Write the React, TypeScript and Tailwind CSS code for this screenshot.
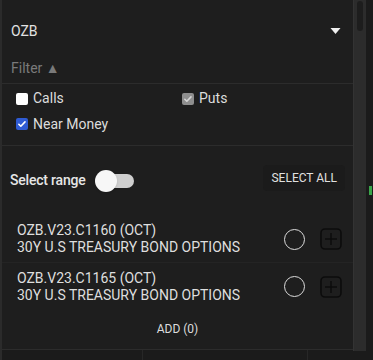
import React from "react";

type Item = { code: string; name: string };

const items: Item[] = [
  { code: "OZB.V23.C1160 (OCT)", name: "30Y U.S TREASURY BOND OPTIONS" },
  { code: "OZB.V23.C1165 (OCT)", name: "30Y U.S TREASURY BOND OPTIONS" },
];

function Check({ tone }: { tone: "off" | "muted" | "on" }) {
  if (tone === "off") {
    return <span className="w-[12px] h-[12px] rounded-[2px] bg-white shrink-0" />;
  }
  const bg = tone === "on" ? "bg-[#2f5bd3]" : "bg-[#8e8e8e]";
  const stroke = tone === "on" ? "#ffffff" : "#d6d6d6";
  return (
    <span className={`w-[12px] h-[12px] rounded-[2px] ${bg} shrink-0 flex items-center justify-center`}>
      <svg viewBox="0 0 12 12" className="w-[10px] h-[10px]">
        <path d="M2.2 6.3l2.4 2.4 5-5.2" stroke={stroke} strokeWidth="1.9" fill="none" strokeLinecap="round" strokeLinejoin="round" />
      </svg>
    </span>
  );
}

export default function App() {
  return (
    <div
      className="w-[373px] h-[360px] overflow-hidden flex bg-[#1b1b1b] text-[#dcdcdc]"
      style={{ fontFamily: "Roboto, 'Noto Sans', sans-serif" }}
    >
      {/* panneau principal */}
      <div className="w-[353px] shrink-0 flex flex-col">
        <div className="h-[350px] flex flex-col bg-[#1e1e1e] border-l-2 border-[#2b2b2b] border-b border-b-[#2c2c2c]">
          <div className="h-[14px] overflow-hidden">
            <div className="-mt-[10px] pl-[30px] text-[13px] text-[#5a5a5a] tracking-[6px]">—— — —— — ——</div>
          </div>

          {/* select */}
          <div className="h-[34px] flex items-center justify-between pl-[9px] pr-[12px]">
            <span className="text-[14px] text-[#e2e2e2]">OZB</span>
            <svg viewBox="0 0 10 6" className="w-[11px] h-[6px]">
              <path d="M0 0h10L5 6z" fill="#f0f0f0" />
            </svg>
          </div>

          {/* filter */}
          <div className="h-[36px] flex items-center pl-[9px] pt-[6px] border-b border-[#2c2c2c] text-[14px] text-[#7a7a7a]">
            Filter ▲
          </div>

          <div className="h-[62px] pt-[1px] border-b border-[#2c2c2c] text-[14px]">
            <div className="grid grid-cols-[166px_1fr] h-[27px] items-center pl-[14px]">
              <label className="flex items-center gap-[5px]">
                <Check tone="off" />
                <span>Calls</span>
              </label>
              <label className="flex items-center gap-[5px]">
                <Check tone="muted" />
                <span>Puts</span>
              </label>
            </div>
            <div className="h-[24px] flex items-center gap-[5px] pl-[14px]">
              <Check tone="on" />
              <span>Near Money</span>
            </div>
          </div>

          {/* range */}
          <div className="h-[70px] flex items-center justify-between pl-[8px] pr-[8px] pb-[1px]">
            <div className="flex items-center gap-[9px]">
              <span className="text-[14px] font-medium tracking-[-0.2px] text-[#e6e6e6]">Select range</span>
              <div className="relative w-[40px] h-[22px] flex items-center">
                <div className="absolute left-[10px] right-[1px] h-[14px] rounded-full bg-[#cfcfcf]" />
                <div className="relative w-[22px] h-[22px] rounded-full bg-[#f7f7f7] shadow" />
              </div>
            </div>
            <button className="h-[26px] px-[8px] rounded bg-[#1b1b1b] text-[12px] text-[#e0e0e0] -mt-[6px]">SELECT ALL</button>
          </div>

          {/* liste */}
          <div className="flex flex-col">
            {items.map((it, i) => (
              <div
                key={i}
                className={`h-[47px] flex items-center justify-between pl-[15px] pr-[11px] ${i === 0 ? "border-b border-[#242424]" : ""}`}
              >
                <div className="flex flex-col leading-[17px] text-[14px] text-[#dedede]">
                  <span>{it.code}</span>
                  <span>{it.name}</span>
                </div>
                <div className="flex items-center gap-[15px]">
                  <span className="w-[21px] h-[21px] rounded-full border-[1.5px] border-[#dcdcdc]" />
                  <svg viewBox="0 0 22 22" className="w-[22px] h-[22px]">
                    <rect x="1" y="1" width="20" height="20" rx="4" stroke="#0c0c0c" strokeWidth="1.6" fill="none" />
                    <path d="M11 5v12M5 11h12" stroke="#0c0c0c" strokeWidth="1.5" />
                  </svg>
                </div>
              </div>
            ))}
          </div>

          <div className="flex-1 flex items-center justify-center text-[12px] text-[#dcdcdc] pb-[2px]">ADD (0)</div>
        </div>
        <div className="flex-1 flex border-l-2 border-[#2b2b2b]">
          <div className="w-[141px] border-r border-[#272727]" />
          <div className="w-[165px] border-r border-[#272727]" />
        </div>
      </div>

      {/* barre de défilement */}
      <div className="w-[13px] h-[351px] shrink-0 bg-[#2c2c2c] border-l border-[#333] flex justify-center pt-[1px]">
        <div className="w-[6px] h-[30px] rounded-full bg-[#1d1d1d]" />
      </div>

      <div className="flex-1 pt-[186px]">
        <div className="w-[3px] h-[9px] ml-[3px] bg-[#3aa64a]" />
      </div>
    </div>
  );
}
